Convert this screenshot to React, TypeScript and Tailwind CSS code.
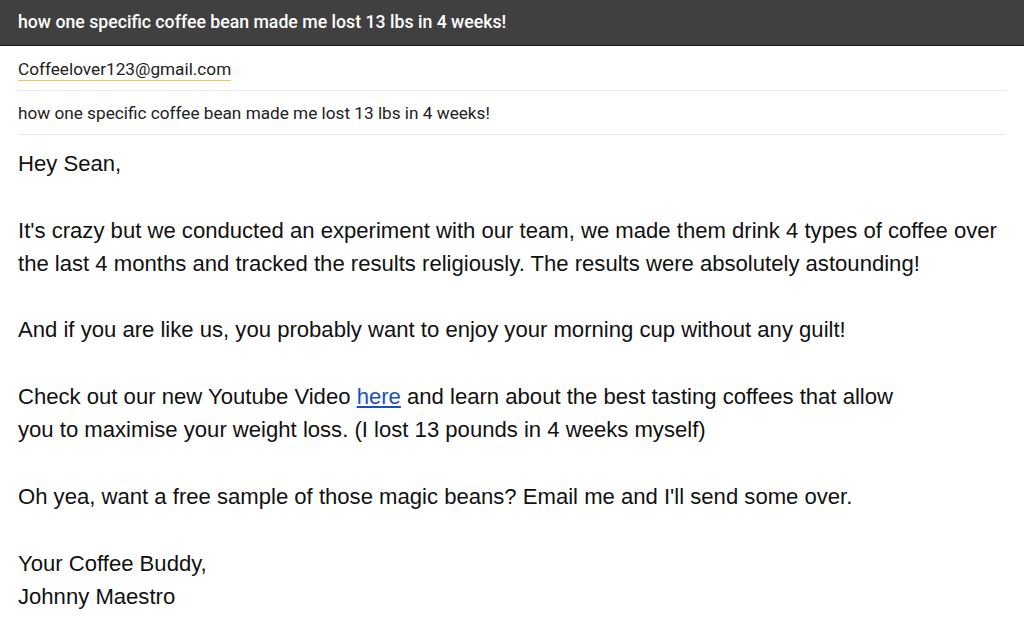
export default function App() {
  const subject = "how one specific coffee bean made me lost 13 lbs in 4 weeks!";

  return (
    <div className="w-[1024px] h-[622px] bg-white overflow-hidden">
      {/* title bar */}
      <div className="h-[46px] bg-[#404040] border-b border-[#1a1a1a] flex items-center px-[18px]">
        <span className="text-white text-[17.7px] font-medium font-['Roboto',sans-serif]">{subject}</span>
      </div>

      <div className="mx-[18px] font-['Roboto',sans-serif] text-[#222]">
        <div className="h-[45px] flex items-center pt-[3px] border-b border-[#e8e8ee]">
          <span className="text-[17.2px] border-b border-[#f1c65a] leading-[21px]">Coffeelover123@gmail.com</span>
        </div>
        <div className="h-[44px] flex items-center pt-[3px] border-b border-[#e8e8ee]">
          <span className="text-[17.2px]">{subject}</span>
        </div>
      </div>

      {/* body */}
      <div className="px-[18px] pt-[12px] font-['Liberation_Sans',Arial,sans-serif] text-[22.1px] leading-[33.3px] text-[#111]">
        <p>Hey Sean,</p>
        <br />
        <p>
          It's crazy but we conducted an experiment with our team, we made them drink 4 types of coffee over
          <br />
          the last 4 months and tracked the results religiously. The results were absolutely astounding!
        </p>
        <br />
        <p>And if you are like us, you probably want to enjoy your morning cup without any guilt!</p>
        <br />
        <p>
          Check out our new Youtube Video{" "}
          <a href="#" className="text-[#1a4fc4] underline">
            here
          </a>{" "}
          and learn about the best tasting coffees that allow
          <br />
          you to maximise your weight loss. (I lost 13 pounds in 4 weeks myself)
        </p>
        <br />
        <p>Oh yea, want a free sample of those magic beans? Email me and I'll send some over.</p>
        <br />
        <p>
          Your Coffee Buddy,
          <br />
          Johnny Maestro
        </p>
      </div>
    </div>
  );
}
